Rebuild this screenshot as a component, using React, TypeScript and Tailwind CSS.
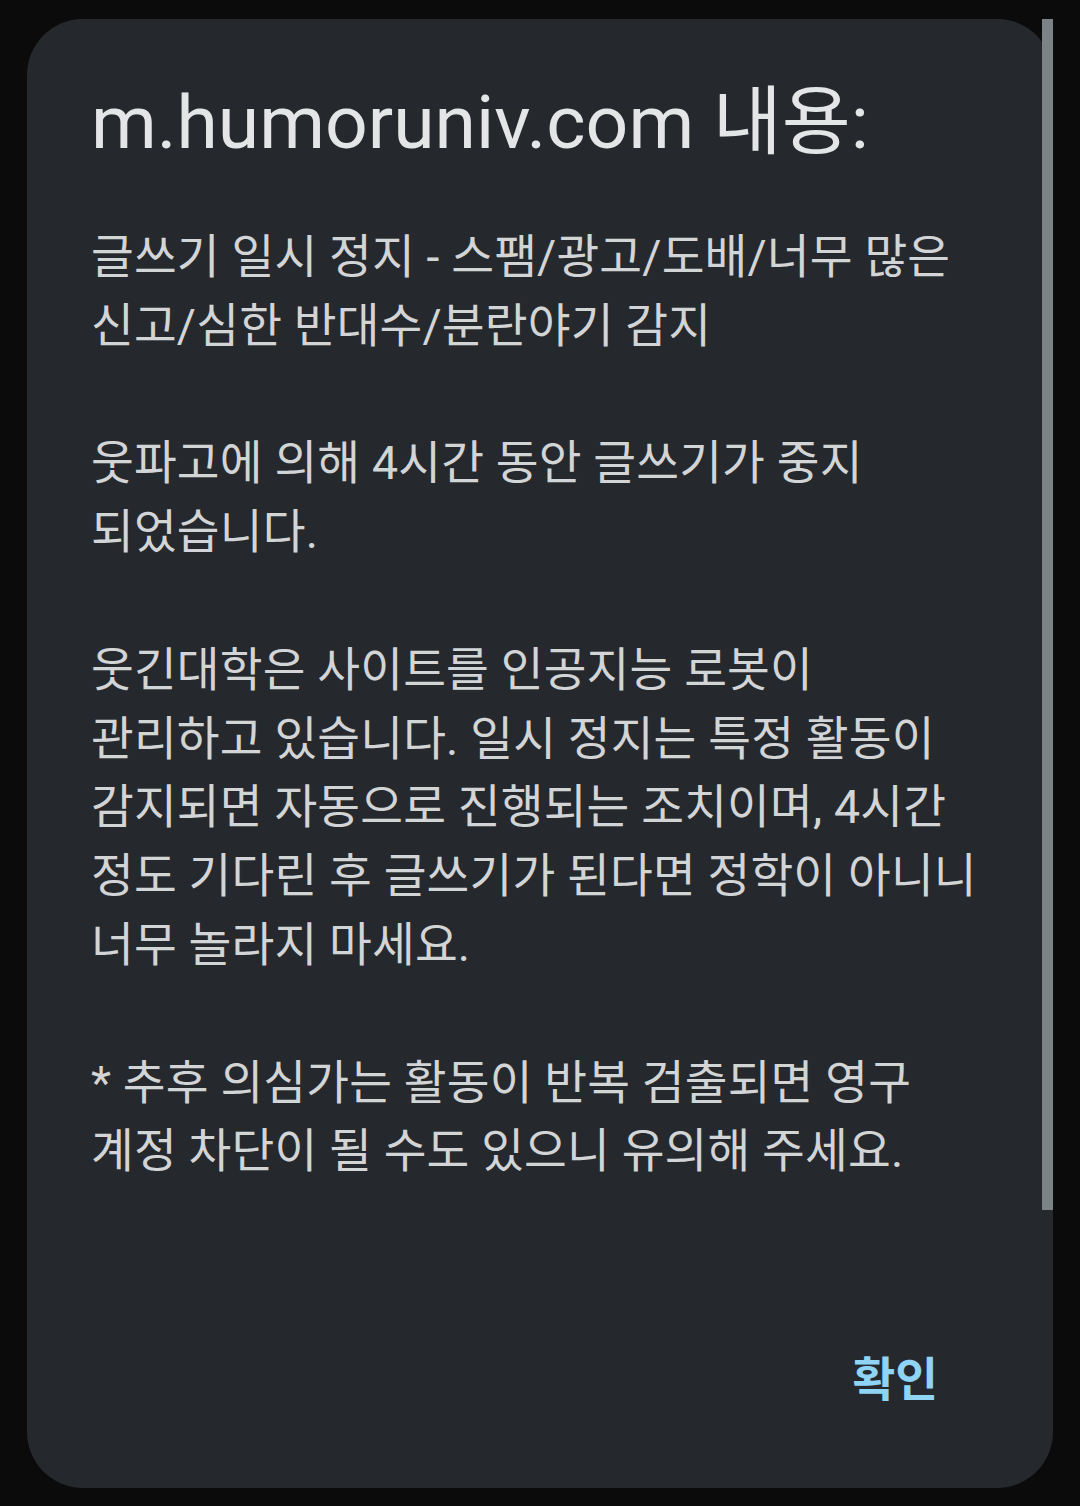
import React from "react";

const lines: (string | null)[] = [
  "글쓰기 일시 정지 - 스팸/광고/도배/너무 많은",
  "신고/심한 반대수/분란야기 감지",
  null,
  "웃파고에 의해 4시간 동안 글쓰기가 중지",
  "되었습니다.",
  null,
  "웃긴대학은 사이트를 인공지능 로봇이",
  "관리하고 있습니다. 일시 정지는 특정 활동이",
  "감지되면 자동으로 진행되는 조치이며, 4시간",
  "정도 기다린 후 글쓰기가 된다면 정학이 아니니",
  "너무 놀라지 마세요.",
  null,
  "* 추후 의심가는 활동이 반복 검출되면 영구",
  "계정 차단이 될 수도 있으니 유의해 주세요.",
];

export default function App() {
  return (
    <div
      className="relative w-[1080px] h-[1506px] bg-[#0b0b0b] pt-[19px] pl-[27px]"
      style={{ fontFamily: "Roboto, 'Noto Sans CJK KR', sans-serif" }}
    >
      <div className="w-[1026px] h-[1469px] rounded-[56px] bg-[#25292d] pl-[64px] pt-[63px] flex flex-col">
        <div className="text-[75px] leading-[80px] text-[#e4e5e7] whitespace-nowrap">
          m.humoruniv.com 내용:
        </div>
        <div className="mt-[61px] text-[46.5px] leading-[68.8px] tracking-[0.15px] text-[#d2d4d6] whitespace-nowrap">
          {lines.map((l, i) =>
            l === null ? (
              <div key={i} className="h-[68.8px]" />
            ) : (
              <div key={i}>{l}</div>
            )
          )}
        </div>
        <div className="flex-1" />
        <div className="flex justify-end pr-[115px] pb-[78px]">
          <span className="text-[46.5px] leading-[60px] font-bold text-[#8fd3f5]">확인</span>
        </div>
      </div>
      <div className="absolute left-[1042px] top-[19px] w-[11px] h-[1191px] bg-[#7c8386]" />
    </div>
  );
}
